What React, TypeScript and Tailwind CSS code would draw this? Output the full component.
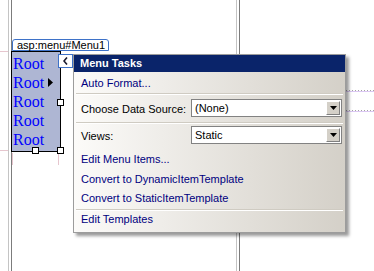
import React from "react";

const tasks = [
  { label: "Edit Menu Items...", mt: "mt-[9px]" },
  { label: "Convert to DynamicItemTemplate", mt: "mt-[7px]" },
  { label: "Convert to StaticItemTemplate", mt: "mt-[6px]" },
];

const Combo = ({ value }: { value: string }) => (
  <div className="ml-auto mr-[3px] flex h-[18px] w-[151px] items-center border border-[#828282] bg-white p-px">
    <span className="flex-1 pl-[2px] leading-[13px] text-black">{value}</span>
    <div className="flex h-[14px] w-[14px] items-center justify-center border border-t-white border-l-white border-r-[#808080] border-b-[#808080] bg-[#d4d0c8]">
      <svg width="7" height="4" viewBox="0 0 7 4">
        <path d="M0 0h7L3.5 4z" fill="#000" />
      </svg>
    </div>
  </div>
);

const Separator = () => (
  <div className="mx-[2px] h-[2px] border-t border-b border-t-[#cfcbc2] border-b-white" />
);

// table cell edge on the design surface: light line + dark line
const CellEdge = () => (
  <div className="h-full w-[4px] shrink-0 border-l border-r border-l-[#c4c4c4] border-r-[#7c7c7c]" />
);

const GuideLine = () => (
  <div>
    <div className="h-px bg-[repeating-linear-gradient(90deg,#a4a4a4_0_1px,transparent_1px_3px)]" />
    <div className="h-px bg-[#dcc8f4]" />
  </div>
);

export default function App() {
  return (
    <div className="relative flex h-[271px] w-[374px] overflow-hidden bg-white font-['Liberation_Sans',Arial,sans-serif] text-[11px]">
      {/* left margin with guide */}
      <div className="w-[8px] shrink-0 pt-[51px]">
        <div className="h-[100px] border-y border-[#e6c6ce]" />
      </div>
      <CellEdge />

      {/* design cell holding the asp:menu control */}
      <div className="w-[224px] shrink-0 pt-[39px]">
        <div className="-ml-px w-[50px]">
          <div className="ml-px h-[12px] w-[97px] rounded-t-[3px] border border-[#3e72c8] bg-white pl-[4px] leading-[10px] text-black">
            asp:menu#Menu1
          </div>
          <div className="relative h-[101px] border border-black bg-[#aeb6d3] pl-px pt-[2px] font-['Liberation_Serif','Times_New_Roman',serif] text-[16px] leading-[19px] text-[#0000ff]">
            {[0, 1, 2, 3, 4].map((i) => (
              <div key={i} className="flex h-[19px] items-center">
                <span>Root</span>
                {i === 1 && (
                  <svg className="ml-[4px]" width="5" height="9" viewBox="0 0 5 9">
                    <path d="M0 0l5 4.5L0 9z" fill="#000" />
                  </svg>
                )}
              </div>
            ))}
            {/* resize handles */}
            <div className="absolute left-[45px] top-[47px] h-[7px] w-[7px] border border-black bg-white" />
            <div className="absolute left-[20px] top-[95px] h-[7px] w-[7px] border border-black bg-white" />
            <div className="absolute left-[45px] top-[95px] h-[7px] w-[7px] border border-black bg-white" />
            {/* smart tag glyph */}
            <div className="absolute left-[46px] top-[2px] flex h-[14px] w-[15px] items-center justify-center border border-[#3e72c8] bg-white">
              <svg width="5" height="8" viewBox="0 0 5 8">
                <path d="M4 0.5L1 4l3 3.5" fill="none" stroke="#1a1a2e" strokeWidth="1.6" />
              </svg>
            </div>
          </div>
          <div className="ml-px mt-px h-[12px] w-[47px] border-x border-[#e6c6ce]" />
        </div>
      </div>

      <CellEdge />

      {/* right cell with the row guides */}
      <div className="flex-1 pl-[100px] pt-[90px]">
        <GuideLine />
        <div className="mt-[18px]">
          <GuideLine />
        </div>
      </div>

      {/* Menu Tasks panel */}
      <div className="absolute left-[73px] top-[54px] flex h-[179px] w-[273px] flex-col border border-[#9c9c9c] shadow-[3px_3px_3px_rgba(0,0,0,0.4)]">
        <div className="flex h-[17px] items-center bg-[#0a246a] pl-[6px] font-bold leading-[13px] text-white">
          Menu Tasks
        </div>
        <div className="flex flex-1 flex-col bg-linear-to-r from-[#fcfbf9] to-[#d4d0c8] leading-[13px]">
          <div className="mt-[5px] pl-[7px] text-[#000080]">Auto Format...</div>
          <div className="mt-[3px]">
            <Separator />
          </div>
          <div className="mt-[4px] flex items-start pl-[7px]">
            <span className="mt-[4px] text-black">Choose Data Source:</span>
            <Combo value="(None)" />
          </div>
          <div className="mt-[5px]">
            <Separator />
          </div>
          <div className="mt-[2px] flex items-start pl-[7px]">
            <span className="mt-[4px] text-black">Views:</span>
            <Combo value="Static" />
          </div>
          {tasks.map((t) => (
            <div key={t.label} className={`${t.mt} pl-[7px] text-[#000080]`}>
              {t.label}
            </div>
          ))}
          <div className="mt-[4px]">
            <Separator />
          </div>
          <div className="mt-[2px] pl-[7px] text-[#000080]">Edit Templates</div>
        </div>
      </div>
    </div>
  );
}
